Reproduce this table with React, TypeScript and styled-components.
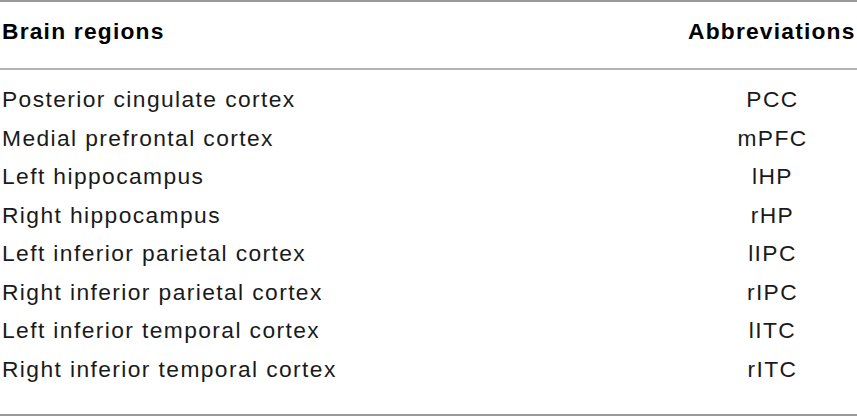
import React from "react";
import styled, { createGlobalStyle } from "styled-components";

const Global = createGlobalStyle`
  html, body { margin: 0; padding: 0; background: #fff; }
  body { font-family: "Liberation Sans", Arial, sans-serif; color: #1a1a1a; }
`;

const Table = styled.div`
  width: 857px;
  height: 416px;
  box-sizing: border-box;
  border-top: 2px solid #9a9a9a;
  border-bottom: 2px solid #9a9a9a;
  display: flex;
  flex-direction: column;
`;

const Row = styled.div<{ $head?: boolean }>`
  display: grid;
  grid-template-columns: 1fr 169px;
  align-items: center;
  padding-left: 2px;
  height: ${(p) => (p.$head ? "26px" : "38.57px")};
  line-height: ${(p) => (p.$head ? "26px" : "38.57px")};
  font-size: 22.8px;
  font-weight: ${(p) => (p.$head ? 700 : 400)};
  letter-spacing: ${(p) => (p.$head ? "1.2px" : "1.4px")};
  white-space: nowrap;
`;

const Head = styled.div`
  padding-top: 16px;
  padding-bottom: 24px;
  border-bottom: 2px solid #b4b4b4;
  color: #000;
`;

const Body = styled.div`
  padding-top: 10px;
`;

const AbbrHead = styled.span`
  text-align: right;
  padding-right: 11px;
`;

const Abbr = styled.span`
  text-align: center;
`;

const rows: [string, string][] = [
  ["Posterior cingulate cortex", "PCC"],
  ["Medial prefrontal cortex", "mPFC"],
  ["Left hippocampus", "lHP"],
  ["Right hippocampus", "rHP"],
  ["Left inferior parietal cortex", "lIPC"],
  ["Right inferior parietal cortex", "rIPC"],
  ["Left inferior temporal cortex", "lITC"],
  ["Right inferior temporal cortex", "rITC"],
];

export default function App() {
  return (
    <>
      <Global />
      <Table>
        <Head>
          <Row $head>
            <span>Brain regions</span>
            <AbbrHead>Abbreviations</AbbrHead>
          </Row>
        </Head>
        <Body>
          {rows.map(([name, abbr]) => (
            <Row key={abbr}>
              <span>{name}</span>
              <Abbr>{abbr}</Abbr>
            </Row>
          ))}
        </Body>
      </Table>
    </>
  );
}
